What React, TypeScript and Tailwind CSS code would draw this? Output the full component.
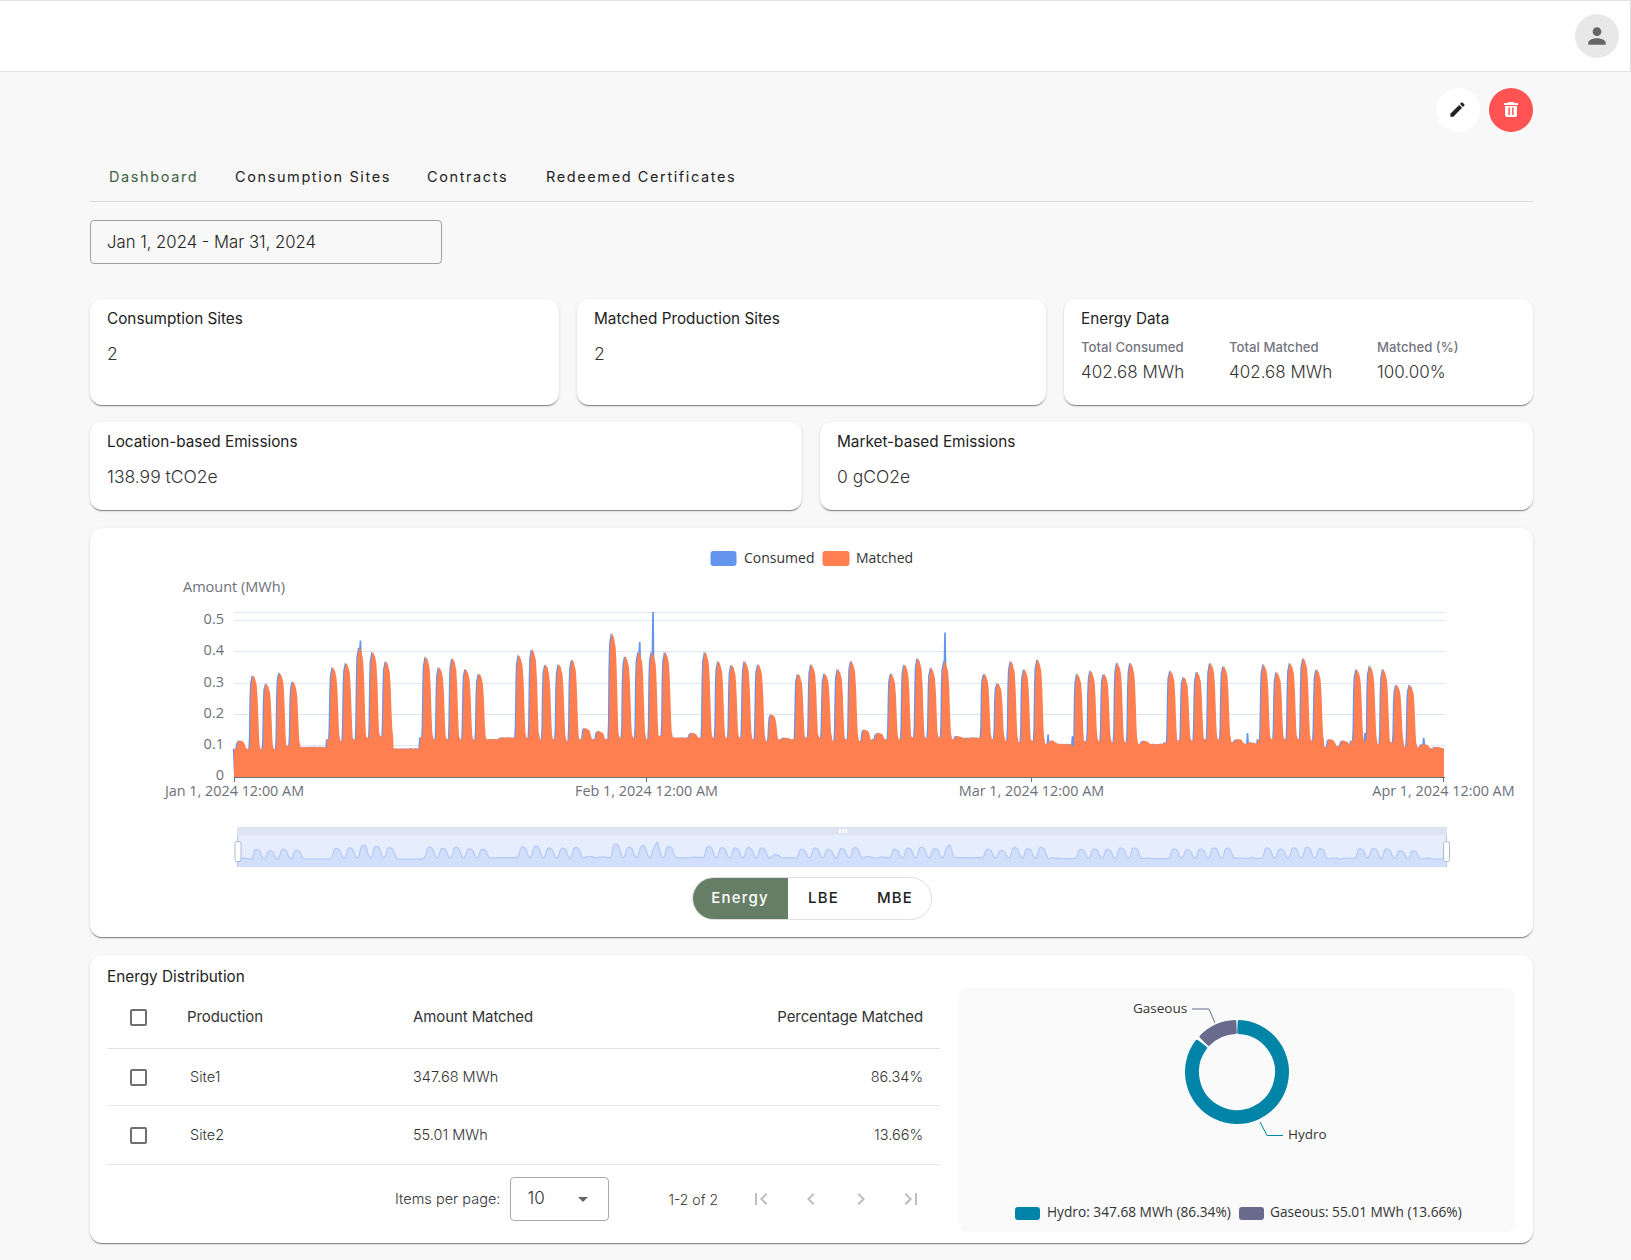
import { MdChevronLeft, MdChevronRight, MdEdit, MdFirstPage, MdLastPage, MdPerson, MdArrowDropDown } from "react-icons/md"

// peak height of every day from Jan 1 (0 means a flat day)
const peaks = [
  0.115, 0.325, 0.3, 0.335, 0.305, 0, 0,
  0.35, 0.365, 0.415, 0.4, 0.37, 0, 0,
  0.385, 0.35, 0.38, 0.345, 0.33, 0, 0,
  0.39, 0.41, 0.36, 0.36, 0.375, 0.155, 0.145,
  0.46, 0.385, 0.4, 0.4, 0.4, 0, 0.14,
  0.4, 0.37, 0.36, 0.37, 0.36, 0.2, 0.125,
  0.33, 0.36, 0.33, 0.345, 0.37, 0.15, 0.14,
  0.33, 0.36, 0.38, 0.35, 0.37, 0.13, 0.125,
  0.33, 0.3, 0.37, 0.345, 0.375, 0.115, 0.105,
  0.33, 0.34, 0.33, 0.365, 0.365, 0.115, 0.105,
  0.34, 0.32, 0.335, 0.365, 0.355, 0.12, 0.11,
  0.36, 0.335, 0.365, 0.38, 0.345, 0.12, 0.115,
  0.345, 0.355, 0.345, 0.295, 0.295, 0.105, 0.095,
]

const bases = [
  0.09, 0.09, 0.09, 0.09, 0.1, 0.095, 0.095,
  0.12, 0.115, 0.12, 0.125, 0.13, 0.09, 0.09,
  0.125, 0.12, 0.12, 0.12, 0.12, 0.12, 0.125,
  0.125, 0.125, 0.12, 0.12, 0.115, 0.12, 0.12,
  0.12, 0.125, 0.125, 0.12, 0.13, 0.125, 0.125,
  0.125, 0.125, 0.125, 0.125, 0.12, 0.115, 0.12,
  0.12, 0.125, 0.125, 0.115, 0.12, 0.115, 0.12,
  0.12, 0.12, 0.125, 0.125, 0.125, 0.12, 0.125,
  0.125, 0.12, 0.115, 0.11, 0.115, 0.105, 0.105,
  0.1, 0.115, 0.115, 0.11, 0.11, 0.105, 0.105,
  0.11, 0.115, 0.115, 0.12, 0.12, 0.11, 0.105,
  0.12, 0.12, 0.12, 0.12, 0.115, 0.095, 0.1,
  0.115, 0.115, 0.105, 0.11, 0.095, 0.095, 0.09,
]

// blue-only spikes as [day, hour, value]
const spikes: [number, number, number][] = [
  [9, 13, 0.435],
  [30, 13, 0.43],
  [31, 13, 0.525],
  [53, 12, 0.46],
  [61, 6, 0.135],
  [63, 2, 0.13],
  [76, 6, 0.14],
  [85, 2, 0.14],
  [89, 12, 0.125],
]

const shapeAt = (t: number) => {
  const stops = [
    [0, 0], [0.2, 0], [0.23, 0.55], [0.29, 0.88], [0.42, 1],
    [0.58, 0.95], [0.72, 0.85], [0.8, 0.6], [0.86, 0.25], [0.92, 0.05], [1, 0],
  ]
  for (let i = 1; i < stops.length; i++) {
    if (t <= stops[i][0]) {
      const k = (t - stops[i - 1][0]) / (stops[i][0] - stops[i - 1][0])
      return stops[i - 1][1] + k * (stops[i][1] - stops[i - 1][1])
    }
  }
  return 0
}

const noise = (i: number) => {
  const v = Math.sin(i * 12.9898) * 43758.5453
  return v - Math.floor(v)
}

const series: number[] = []
peaks.forEach((peak, day) => {
  for (let h = 0; h < 24; h++) {
    const base = bases[day]
    const top = peak === 0 ? base : peak
    const v = base + (top - base) * shapeAt(h / 24)
    series.push(v + (noise(day * 24 + h) - 0.5) * 0.004)
  }
})

const chartLeft = 234
const chartWidth = 1210
const zero = 777
const perUnit = 314
const xAt = (i: number) => chartLeft + (i / series.length) * chartWidth
const yAt = (v: number) => zero - v * perUnit

const matchedPath =
  `M${chartLeft} ${zero}` +
  series.map((v, i) => `L${xAt(i).toFixed(1)} ${yAt(v).toFixed(1)}`).join("") +
  `L${chartLeft + chartWidth} ${yAt(0.095).toFixed(1)}L${chartLeft + chartWidth} ${zero}Z`

const consumedSeries = series.slice()
spikes.forEach(([day, hour, value]) => {
  for (let k = 0; k < 4; k++) consumedSeries[day * 24 + hour + k] = value
})
const consumedPath =
  `M${chartLeft} ${zero}` +
  consumedSeries.map((v, i) => `L${(xAt(i) - 1.2).toFixed(1)} ${yAt(v).toFixed(1)}`).join("") +
  `L${chartLeft + chartWidth} ${zero}Z`

// overview line of the data zoom, a smoothed copy of the series
const miniPoints: string[] = []
for (let i = 0; i < series.length; i += 2) {
  let sum = 0
  let n = 0
  for (let j = Math.max(0, i - 2); j < Math.min(series.length, i + 3); j++) {
    sum += consumedSeries[j]
    n++
  }
  const x = 237 + (i / series.length) * 1210
  miniPoints.push(`${x.toFixed(1)} ${(863 - (sum / n) * 42).toFixed(1)}`)
}
const miniLine = "M" + miniPoints.join("L")
const miniArea = `M237 867L${miniPoints.join("L")}L1447 859L1447 867Z`

const yTicks = [
  { label: "0.5", y: 618.5 },
  { label: "0.4", y: 650 },
  { label: "0.3", y: 681.5 },
  { label: "0.2", y: 712.5 },
  { label: "0.1", y: 744 },
  { label: "0", y: 775 },
]

const xTicks = [
  { label: "Jan 1, 2024 12:00 AM", x: 234.5 },
  { label: "Feb 1, 2024 12:00 AM", x: 646.5 },
  { label: "Mar 1, 2024 12:00 AM", x: 1031.5 },
  { label: "Apr 1, 2024 12:00 AM", x: 1443.5 },
]

const chartFont = "'Open Sans', 'Noto Sans', sans-serif"

function EnergyChart() {
  return (
    <svg viewBox="90 528 1443 349" className="block h-[349px] w-full" fontFamily={chartFont}>
      <rect x="710.5" y="551" width="26" height="15" rx="3" fill="#6495ED" />
      <text x="744" y="563" fontSize="14" fill="#333">Consumed</text>
      <rect x="822.5" y="551" width="27" height="15" rx="3" fill="#FF7F50" />
      <text x="856" y="563" fontSize="14" fill="#333">Matched</text>

      <text x="183" y="592" fontSize="14.5" fill="#6E7079">Amount (MWh)</text>

      <line x1="234" x2="1445" y1="612.5" y2="612.5" stroke="#E0E6F1" />
      {[620.5, 651.5, 683.5, 714.5, 745.5].map((y) => (
        <line key={y} x1="234" x2="1445" y1={y} y2={y} stroke="#E0E6F1" />
      ))}
      {yTicks.map((t) => (
        <text key={t.label} x="224" y={t.y + 5} fontSize="14.5" textAnchor="end" fill="#6E7079">{t.label}</text>
      ))}

      <path d={consumedPath} fill="#6495ED" />
      <path d={matchedPath} fill="#FF7F50" />

      <line x1="234" x2="1445" y1="777.5" y2="777.5" stroke="#6E7079" />
      {xTicks.map((t) => (
        <g key={t.label}>
          <line x1={t.x} x2={t.x} y1="777" y2="782" stroke="#6E7079" />
          <text x={t.x} y="796" fontSize="14.4" textAnchor="middle" fill="#6E7079">{t.label}</text>
        </g>
      ))}

      <rect x="237" y="827" width="1210" height="8" fill="#DFE4F2" />
      <rect x="237" y="835" width="1210" height="32" fill="#E6EDFD" />
      <path d={miniArea} fill="#D2DFFB" />
      <path d={miniLine} fill="none" stroke="#B3C9F7" strokeWidth="1.2" strokeLinejoin="round" />
      <line x1="237.5" x2="237.5" y1="835" y2="867" stroke="#BCC8E0" />
      <line x1="1446.5" x2="1446.5" y1="835" y2="867" stroke="#BCC8E0" />
      <rect x="235" y="841.5" width="6" height="20" rx="2" fill="#fff" stroke="#ACB8D1" />
      <rect x="1443.5" y="841.5" width="6" height="20" rx="2" fill="#fff" stroke="#ACB8D1" />
      <rect x="839" y="829" width="2" height="4" fill="#fff" />
      <rect x="842" y="829" width="2" height="4" fill="#fff" />
      <rect x="845" y="829" width="2" height="4" fill="#fff" />
    </svg>
  )
}

// angle in degrees, clockwise from twelve o'clock
const polar = (r: number, deg: number) => {
  const a = (deg * Math.PI) / 180
  return `${(1237 + r * Math.sin(a)).toFixed(2)} ${(1072 - r * Math.cos(a)).toFixed(2)}`
}

const ringSlice = (from: number, to: number) => {
  const large = to - from > 180 ? 1 : 0
  return `M${polar(50.5, from)}A50.5 50.5 0 ${large} 1 ${polar(50.5, to)}L${polar(39.5, to)}A39.5 39.5 0 ${large} 0 ${polar(39.5, from)}Z`
}

function DonutChart() {
  return (
    <svg viewBox="959 988 556 244" className="block h-[244px] w-full rounded-lg bg-[#fafafa]" fontFamily={chartFont}>
      <path d={ringSlice(2.5, 307.5)} fill="#0085A9" stroke="#0085A9" strokeWidth="3" strokeLinejoin="round" />
      <path d={ringSlice(314.5, 357.5)} fill="#686B8B" stroke="#686B8B" strokeWidth="3" strokeLinejoin="round" />
      <path d="M1192 1009H1209L1215 1023" fill="none" stroke="#686B8B" />
      <path d="M1260 1122L1267 1135.5H1283" fill="none" stroke="#0085A9" />
      <text x="1133" y="1013" fontSize="13.5" fill="#333">Gaseous</text>
      <text x="1288" y="1139" fontSize="13.5" fill="#333">Hydro</text>
      <rect x="1015" y="1207" width="25" height="13" rx="3" fill="#0085A9" />
      <text x="1047" y="1217" fontSize="13.7" fill="#333">Hydro: 347.68 MWh (86.34%)</text>
      <rect x="1239" y="1207" width="25" height="13" rx="3" fill="#686B8B" />
      <text x="1270" y="1217" fontSize="13.7" fill="#333">Gaseous: 55.01 MWh (13.66%)</text>
    </svg>
  )
}

function BinIcon() {
  return (
    <svg width="14" height="15" viewBox="0 0 14 15" fill="currentColor">
      <path d="M4.5 0h5l1 1H14v2H0V1h3.5z" />
      <path
        fillRule="evenodd"
        d="M1 4h12v9a2 2 0 0 1-2 2H3a2 2 0 0 1-2-2zm3.4 1.6v7.4h1.5V5.6zm3.7 0v7.4h1.5V5.6z"
      />
    </svg>
  )
}

const cardClass = "rounded-xl bg-white shadow-[0_2px_1px_-1px_rgba(0,0,0,0.3),0_1px_1px_0_rgba(0,0,0,0.18),0_1px_3px_0_rgba(0,0,0,0.12)]"

function StatCard({ title, value, className }: { title: string; value: string; className: string }) {
  return (
    <div className={`${cardClass} pl-[17px] pr-4 ${className}`}>
      <p className="pt-[10px] text-[15.3px] leading-[20px] text-[#222]">{title}</p>
      <p className="mt-[13px] text-[17.5px] leading-[24px] font-light text-[#333]">{value}</p>
    </div>
  )
}

function EnergyStat({ label, value }: { label: string; value: string }) {
  return (
    <div>
      <p className="text-[13.2px] leading-[18px] font-medium text-[#75757f]">{label}</p>
      <p className="mt-[3px] text-[17px] leading-[26px] font-light text-[#333]">{value}</p>
    </div>
  )
}

function Checkbox() {
  return <span className="block size-[17px] rounded-[2px] border-2 border-[#6f6f6f]" />
}

const rows = [
  { name: "Site1", amount: "347.68 MWh", pct: "86.34%", h: "h-[57px]" },
  { name: "Site2", amount: "55.01 MWh", pct: "13.66%", h: "h-[59px]" },
]

export default function App() {
  return (
    <div className="min-h-screen bg-[#f8f8f8] font-['Inter','Noto_Sans',sans-serif] text-[#222]">
      <header className="flex h-[72px] items-center justify-end border border-l-0 border-[#e0e0e0] bg-white pr-[11px]">
        <button className="flex size-[44px] items-center justify-center rounded-full bg-[#e8e8e8] text-[#666]">
          <MdPerson size={26} />
        </button>
      </header>

      <main className="pl-[90px] pr-[98px]">
        <div className="flex justify-end gap-[9px] pt-[16px]">
          <button className="flex size-[44px] items-center justify-center rounded-full bg-white pb-[1px] pr-[1px] text-[#222]">
            <MdEdit size={19} />
          </button>
          <button className="flex size-[44px] items-center justify-center rounded-full bg-[#ff5252] pb-[1px] text-white">
            <BinIcon />
          </button>
        </div>

        <nav className="mt-[21px] flex h-[49px] items-center border-b border-[#dcdcdc] text-[14.5px] tracking-[1.6px]">
          <a className="w-[145px] pl-[19px] text-[#3f6140]">Dashboard</a>
          <a className="w-[192px]">Consumption Sites</a>
          <a className="w-[119px]">Contracts</a>
          <a>Redeemed Certificates</a>
        </nav>

        <div className="mt-[18px] flex h-[44px] w-[352px] items-center rounded border border-[#a0a0a0] px-4 pt-[2px] text-[16.7px] font-light text-[#222]">
          Jan 1, 2024 - Mar 31, 2024
        </div>

        <div className="mt-[35px] grid grid-cols-3 gap-[18px]">
          <StatCard title="Consumption Sites" value="2" className="h-[106px]" />
          <StatCard title="Matched Production Sites" value="2" className="h-[106px]" />
          <div className={`${cardClass} h-[106px] pl-[17px] pr-4`}>
            <p className="pt-[10px] text-[15.3px] leading-[20px] text-[#222]">Energy Data</p>
            <div className="mt-[9px] grid grid-cols-[148px_148px_1fr]">
              <EnergyStat label="Total Consumed" value="402.68 MWh" />
              <EnergyStat label="Total Matched" value="402.68 MWh" />
              <EnergyStat label="Matched (%)" value="100.00%" />
            </div>
          </div>
        </div>

        <div className="mt-[17px] grid grid-cols-[712px_1fr] gap-[18px]">
          <StatCard title="Location-based Emissions" value="138.99 tCO2e" className="h-[88px]" />
          <StatCard title="Market-based Emissions" value="0 gCO2e" className="h-[88px]" />
        </div>

        <section className={`${cardClass} mt-[18px] h-[409px]`}>
          <EnergyChart />
          <div className="flex justify-center">
            <div className="flex h-[43px] w-[240px] overflow-hidden rounded-full border border-[#dedede] text-[15px] font-medium tracking-[1.2px]">
              <span className="flex w-[95px] items-center justify-center bg-[#667e66] text-white">Energy</span>
              <span className="flex w-[72px] items-center justify-center">LBE</span>
              <span className="flex w-[71px] items-center justify-center">MBE</span>
            </div>
          </div>
        </section>

        <section className={`${cardClass} mt-[18px] flex h-[288px] pl-[17px] pr-[18px]`}>
          <div className="w-[833px]">
            <p className="pt-[12px] text-[15.3px] leading-[20px] text-[#222]">Energy Distribution</p>
            <div className="flex h-[62px] items-center border-b border-[#e0e0e0] text-[15px] tracking-[-0.1px] text-[#333]">
              <span className="pl-[23px]"><Checkbox /></span>
              <span className="w-[266px] pl-[40px]">Production</span>
              <span className="flex-1">Amount Matched</span>
              <span className="pr-[17px]">Percentage Matched</span>
            </div>
            {rows.map((r) => (
              <div key={r.name} className={`flex items-center border-b border-[#e8e8e8] text-[14.5px] font-light text-[#333] ${r.h}`}>
                <span className="pl-[23px]"><Checkbox /></span>
                <span className="w-[266px] pl-[43px]">{r.name}</span>
                <span className="flex-1">{r.amount}</span>
                <span className="pr-[17px]">{r.pct}</span>
              </div>
            ))}
            <div className="mt-[12px] flex items-center justify-end text-[14.5px] font-light text-[#333]">
              <span>Items per page:</span>
              <div className="ml-[10px] flex h-[44px] w-[99px] items-center justify-between rounded border border-[#aaa] pl-4 pr-[13px]">
                <span className="text-[17px]">10</span>
                <MdArrowDropDown size={24} className="text-[#666]" />
              </div>
              <span className="ml-[59px] mr-[31px] text-[14px]">1-2 of 2</span>
              <div className="flex items-center gap-[26px] pr-[17px] text-[#bdbdbd]">
                <MdFirstPage size={24} />
                <MdChevronLeft size={24} />
                <MdChevronRight size={24} />
                <MdLastPage size={24} />
              </div>
            </div>
          </div>
          <div className="ml-[19px] flex-1 pt-[33px]">
            <DonutChart />
          </div>
        </section>
      </main>
    </div>
  )
}
